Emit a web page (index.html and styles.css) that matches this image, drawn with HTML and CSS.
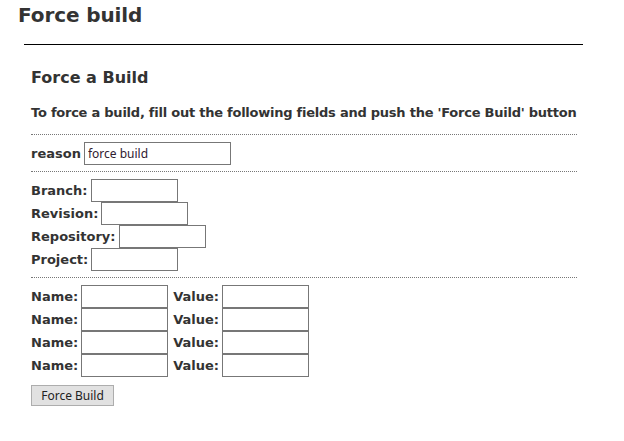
FILE: index.html
```html
<!DOCTYPE html>
<html>
<head>
<meta charset="utf-8">
<title>Force build</title>
<link rel="stylesheet" href="styles.css">
</head>
<body>
<h1 class="page-title">Force build</h1>
<div class="rule"></div>
<div class="content">
  <h2 class="section-title">Force a Build</h2>
  <p class="intro">To force a build, fill out the following fields and push the 'Force Build' button</p>
  <form class="force-form">
    <div class="group">
      <div class="row"><span class="label">reason</span><input class="field wide" type="text" value="force build"></div>
    </div>
    <div class="group">
      <div class="row"><span class="label">Branch:</span><input class="field" type="text"></div>
      <div class="row"><span class="label">Revision:</span><input class="field" type="text"></div>
      <div class="row"><span class="label">Repository:</span><input class="field" type="text"></div>
      <div class="row"><span class="label">Project:</span><input class="field" type="text"></div>
    </div>
    <div class="group last">
      <div class="row"><span class="label">Name:</span><input class="field" type="text"><span class="label next">Value:</span><input class="field" type="text"></div>
      <div class="row"><span class="label">Name:</span><input class="field" type="text"><span class="label next">Value:</span><input class="field" type="text"></div>
      <div class="row"><span class="label">Name:</span><input class="field" type="text"><span class="label next">Value:</span><input class="field" type="text"></div>
      <div class="row"><span class="label">Name:</span><input class="field" type="text"><span class="label next">Value:</span><input class="field" type="text"></div>
    </div>
    <button class="submit" type="button">Force Build</button>
  </form>
</div>
</body>
</html>
```

FILE: styles.css
```css
html, body {
  margin: 0;
  padding: 0;
  background: #fff;
}
body {
  font-family: "DejaVu Sans", Verdana, sans-serif;
  color: #333;
}
.page-title {
  margin: 0;
  padding: 1px 0 0 18px;
  font-size: 20px;
  line-height: 28px;
  font-weight: bold;
  letter-spacing: -0.1px;
}
.rule {
  margin: 15px 0 0 24px;
  width: 559px;
  border-top: 1px solid #000;
}
.content {
  padding-left: 31px;
  width: 546px;
}
.section-title {
  margin: 23px 0 0 0;
  font-size: 16px;
  line-height: 20px;
  font-weight: bold;
}
.intro {
  margin: 17px 0 0 0;
  font-size: 13px;
  line-height: 16px;
  font-weight: bold;
  letter-spacing: -0.24px;
  white-space: nowrap;
}
.force-form {
  margin: 13px 0 0 0;
}
.group {
  border-top: 1px dotted #777;
  padding: 7px 0 6px 0;
}
.group.last {
  padding-bottom: 8px;
}
.row {
  display: flex;
  align-items: center;
  gap: 3px;
  height: 23px;
  font-size: 13px;
}
.label {
  font-weight: bold;
}
.label.next {
  margin-left: 2px;
}
.field {
  box-sizing: border-box;
  width: 87px;
  height: 23px;
  margin: 0;
  padding: 0 3px;
  border: 1px solid #777;
  background: #fff;
  font-family: "Noto Sans", "Open Sans", sans-serif;
  font-size: 12px;
  color: #302030;
  outline: none;
}
.field.wide {
  width: 147px;
}
.submit {
  box-sizing: border-box;
  display: block;
  width: 83px;
  height: 21px;
  margin: 0;
  padding: 0;
  border: 1px solid #adadad;
  background: #e1e1e1;
  font-family: "Noto Sans", "Open Sans", sans-serif;
  font-size: 12px;
  line-height: 19px;
  color: #222;
}
```
